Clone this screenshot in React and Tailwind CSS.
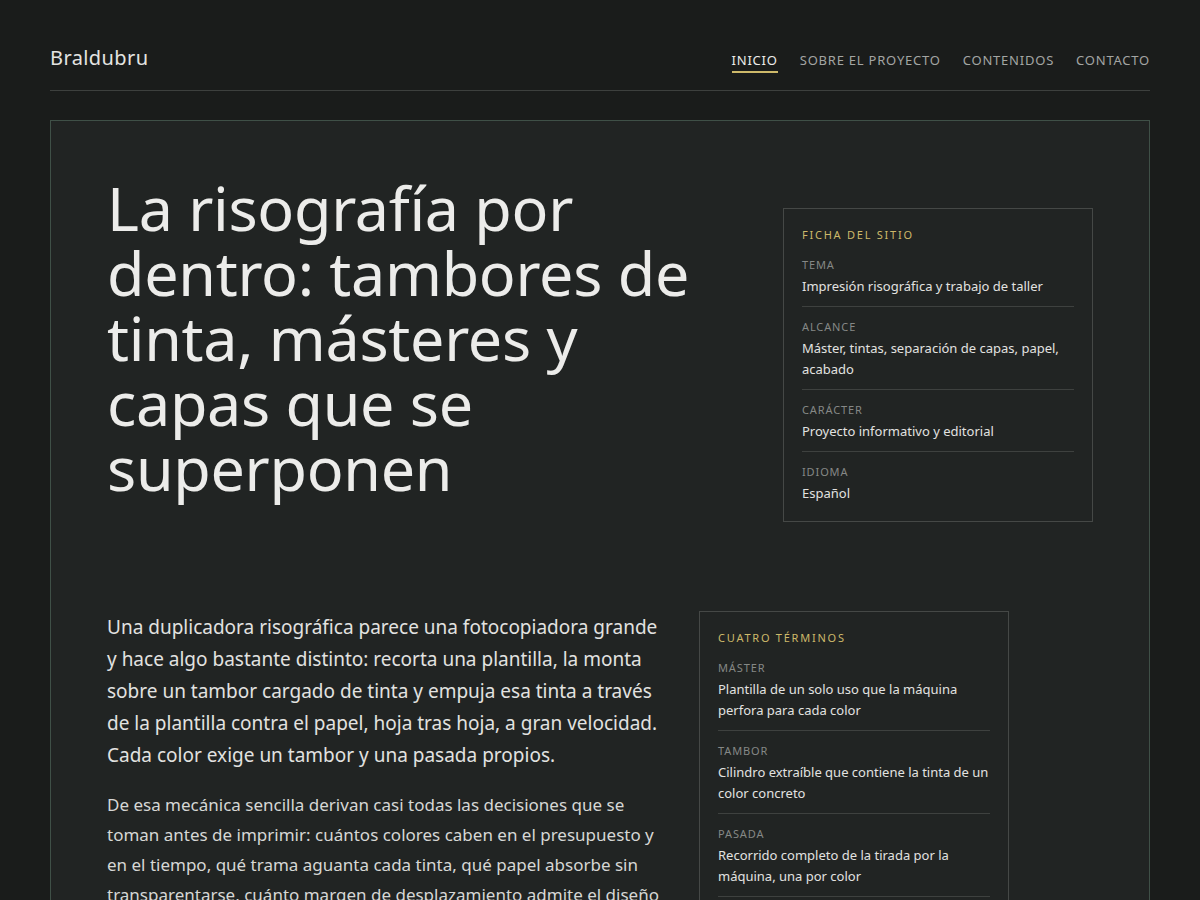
import React from "react";

const ficha = [
  { label: "Tema", value: "Impresión risográfica y trabajo de taller" },
  { label: "Alcance", value: "Máster, tintas, separación de capas, papel, acabado" },
  { label: "Carácter", value: "Proyecto informativo y editorial" },
  { label: "Idioma", value: "Español" },
];

const terminos = [
  { label: "Máster", value: "Plantilla de un solo uso que la máquina perfora para cada color" },
  { label: "Tambor", value: "Cilindro extraíble que contiene la tinta de un color concreto" },
  { label: "Pasada", value: "Recorrido completo de la tirada por la máquina, una por color" },
  { label: "Registro", value: "Coincidencia entre las capas de color sobre la misma hoja" },
];

const nav = ["Inicio", "Sobre el proyecto", "Contenidos", "Contacto"];

// Bordered box with a gold heading and a list of label/value rows
function InfoBox({ title, items, className = "" }) {
  return (
    <aside className={`w-[310px] border border-[#454846] px-[18px] pt-[18px] pb-[17px] ${className}`}>
      <div className="text-[11px] leading-4 tracking-[0.16em] uppercase text-[#cdb96a]">
        {title}
      </div>
      <dl className="mt-[14px]">
        {items.map((it, i) => (
          <div
            key={it.label}
            className={`${i > 0 ? "border-t border-[#3e413f] pt-[12px]" : ""} ${
              i < items.length - 1 ? "pb-[9px]" : ""
            }`}
          >
            <dt className="text-[11px] leading-4 tracking-[0.08em] uppercase text-[#858886]">
              {it.label}
            </dt>
            <dd className="mt-[3px] text-[13px] leading-[21px] text-[#e2e2e0]">{it.value}</dd>
          </div>
        ))}
      </dl>
    </aside>
  );
}

export default function App() {
  return (
    <div className="min-h-screen bg-[#1a1c1b] text-[#e6e6e4] font-['Noto_Sans',sans-serif]">
      <div className="mx-auto w-[1100px]">
        {/* HEADER */}
        <header className="flex items-end justify-between pt-[44px] pb-[18px] border-b border-[#3d403e]">
          <div className="text-[20px] leading-7 text-[#e4e4e2] tracking-[0.02em]">Braldubru</div>
          <nav className="flex gap-[22px] mb-[-1px]">
            {nav.map((n, i) => (
              <a
                key={n}
                href="#"
                className={`text-[13px] leading-5 uppercase tracking-[0.06em] pb-[1px] border-b-2 ${
                  i === 0 ? "text-[#ececea] border-[#cdb96a]" : "text-[#a3a5a3] border-transparent"
                }`}
              >
                {n}
              </a>
            ))}
          </nav>
        </header>

        {/* MAIN PANEL */}
        <main className="mt-[29px] border border-[#3f5047] bg-[#212423] px-14 pt-[54px] pb-16">
          <section className="flex justify-between items-start">
            <h1 className="w-[610px] text-[61px] leading-[65px] text-[#ececea] tracking-[-0.005em]">
              La risografía por dentro: tambores de tinta, másteres y capas que se superponen
            </h1>
            <InfoBox title="Ficha del sitio" items={ficha} className="mt-[33px]" />
          </section>

          <section className="mt-[89px] grid grid-cols-[552px_310px] gap-10 items-start">
            <div>
              <p className="text-[19px] leading-8 text-[#e2e2e0]">
                Una duplicadora risográfica parece una fotocopiadora grande y hace algo bastante
                distinto: recorta una plantilla, la monta sobre un tambor cargado de tinta y empuja
                esa tinta a través de la plantilla contra el papel, hoja tras hoja, a gran velocidad.
                Cada color exige un tambor y una pasada propios.
              </p>
              <p className="mt-[19px] text-[17px] leading-[30px] text-[#d6d7d5]">
                De esa mecánica sencilla derivan casi todas las decisiones que se toman antes de
                imprimir: cuántos colores caben en el presupuesto y en el tiempo, qué trama aguanta
                cada tinta, qué papel absorbe sin transparentarse, cuánto margen de desplazamiento
                admite el diseño y en qué orden conviene pasar cada capa.
              </p>
            </div>
            <InfoBox title="Cuatro términos" items={terminos} />
          </section>
        </main>
      </div>
    </div>
  );
}
